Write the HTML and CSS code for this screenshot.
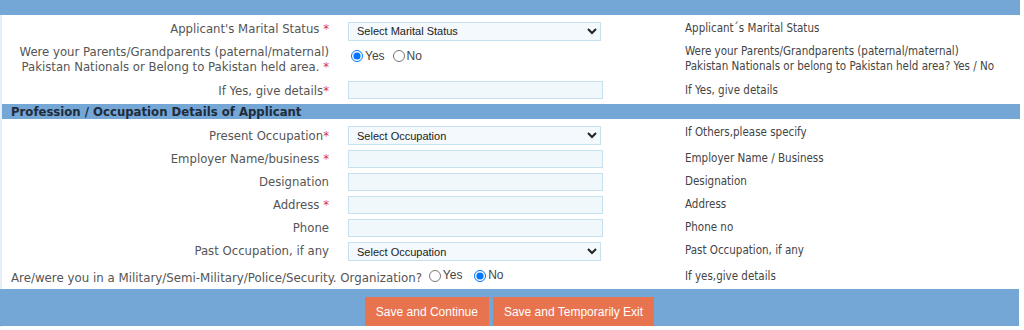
FILE: index.html
```html
<!DOCTYPE html>
<html>
<head>
    <title>Applicant Details</title>
    <link rel="stylesheet" href="styles.css">
</head>
<body>
    <div class="form-wrap">
        <div class="top-bar"></div>

        <div class="rows first-block">
            <div class="row row-first">
                <div class="label">Applicant's Marital Status <span class="req">*</span></div>
                <div class="field">
                    <select class="sel">
                        <option>Select Marital Status</option>
                    </select>
                </div>
                <div class="help">Applicant´s Marital Status</div>
            </div>

            <div class="row row-tall">
                <div class="label">Were your Parents/Grandparents (paternal/maternal)<br>Pakistan Nationals or Belong to Pakistan held area. <span class="req">*</span></div>
                <div class="field field-top">
                    <label class="radio"><input type="radio" name="parents" checked>Yes</label>
                    <label class="radio"><input type="radio" name="parents">No</label>
                </div>
                <div class="help">Were your Parents/Grandparents (paternal/maternal)<br>Pakistan Nationals or belong to Pakistan held area? Yes / No</div>
            </div>

            <div class="row row-details">
                <div class="label">If Yes, give details<span class="req">*</span></div>
                <div class="field"><input type="text" class="txt"></div>
                <div class="help">If Yes, give details</div>
            </div>
        </div>

        <div class="section-title">Profession / Occupation Details of Applicant</div>

        <div class="rows second-block">
            <div class="row">
                <div class="label">Present Occupation<span class="req">*</span></div>
                <div class="field">
                    <select class="sel">
                        <option>Select Occupation</option>
                    </select>
                </div>
                <div class="help help-up">If Others,please specify</div>
            </div>
            <div class="row">
                <div class="label">Employer Name/business <span class="req">*</span></div>
                <div class="field"><input type="text" class="txt"></div>
                <div class="help">Employer Name / Business</div>
            </div>
            <div class="row">
                <div class="label">Designation</div>
                <div class="field"><input type="text" class="txt"></div>
                <div class="help">Designation</div>
            </div>
            <div class="row">
                <div class="label">Address <span class="req">*</span></div>
                <div class="field"><input type="text" class="txt"></div>
                <div class="help">Address</div>
            </div>
            <div class="row">
                <div class="label">Phone</div>
                <div class="field"><input type="text" class="txt"></div>
                <div class="help">Phone no</div>
            </div>
            <div class="row row-past">
                <div class="label">Past Occupation, if any</div>
                <div class="field">
                    <select class="sel">
                        <option>Select Occupation</option>
                    </select>
                </div>
                <div class="help">Past Occupation, if any</div>
            </div>
            <div class="row row-last">
                <div class="label label-wide">Are/were you in a Military/Semi-Military/Police/Security. Organization?
                    <label class="radio"><input type="radio" name="military">Yes</label>
                    <label class="radio"><input type="radio" name="military" checked>No</label>
                </div>
                <div class="help">If yes,give details</div>
            </div>
        </div>

        <div class="actions">
            <button type="button" class="btn">Save and Continue</button>
            <button type="button" class="btn">Save and Temporarily Exit</button>
        </div>
    </div>
</body>
</html>
```

FILE: styles.css
```css
body {
    margin: 0;
    background: #fff;
    font-family: "DejaVu Sans Condensed", "DejaVu Sans", sans-serif;
    font-stretch: condensed;
    color: #555;
}

.form-wrap {
    width: 1020px;
    height: 327px;
    border-left: 2px solid #e6eef7;
    box-sizing: border-box;
}

.top-bar {
    height: 15px;
    background: #74a6d6;
    margin-left: -2px;
}

.rows {
    display: flex;
    flex-direction: column;
}

.first-block {
    padding: 2px 0 0;
}

.second-block {
    padding: 5px 0 1px;
}

.row {
    display: grid;
    grid-template-columns: 338px 337px 1fr;
    align-items: center;
    min-height: 23px;
}

.row-first {
    height: 27px;
}

.row-first .label,
.row-first .help {
    padding-bottom: 4px;
}

.row-first .field {
    padding-top: 1px;
}

.row-tall {
    height: 33px;
    align-items: start;
}

.row-details {
    height: 26px;
}

.row-past .field {
    padding-top: 2px;
}

.row-last {
    height: 26px;
    padding-top: 3px;
    box-sizing: border-box;
}

.label {
    text-align: right;
    padding-right: 11px;
    font-size: 13px;
    line-height: 15px;
}

.label-wide {
    grid-column: 1 / 3;
    text-align: left;
    padding-left: 9px;
    font-size: 13.15px;
}

.req {
    color: #d03a3a;
}

.field {
    padding-left: 8px;
    display: flex;
    align-items: center;
}

.field-top {
    padding-top: 5px;
}

.help {
    padding-left: 8px;
    font-size: 11.5px;
    line-height: 15px;
    color: #444;
}

.help-up {
    padding-bottom: 6px;
}

.sel {
    width: 253px;
    height: 19px;
    font-family: "Liberation Sans", Arial, sans-serif;
    font-size: 11px;
    color: #222;
    background: #f3f9fc;
    border: 1px solid #c6e0ed;
    border-radius: 0;
    padding: 0 0 0 4px;
}

.txt {
    width: 255px;
    height: 18px;
    box-sizing: border-box;
    background: #f1f8fc;
    border: 1px solid #c6e0ed;
    padding: 0 4px;
    margin: 0;
}

.radio {
    font-family: "Liberation Sans", Arial, sans-serif;
    font-size: 12px;
    color: #444;
    margin-right: 5px;
    display: inline-flex;
    align-items: center;
}

.radio input {
    margin: 0 2px 0 3px;
    width: 12px;
    height: 12px;
}

.section-title {
    background: #74a6d6;
    color: #1f2c3a;
    font-weight: bold;
    font-size: 13px;
    line-height: 15px;
    padding-left: 9px;
    margin-top: 1px;
}

.actions {
    background: #74a6d6;
    display: flex;
    justify-content: center;
    gap: 4px;
    padding: 8px 0 0;
    height: 37px;
    box-sizing: border-box;
    margin-left: -2px;
    margin-right: 1px;
}

.btn {
    background: #e8734f;
    color: #fff;
    border: none;
    font-family: "Liberation Sans", Arial, sans-serif;
    font-size: 12px;
    height: 29px;
    padding: 0 11px;
}
```
